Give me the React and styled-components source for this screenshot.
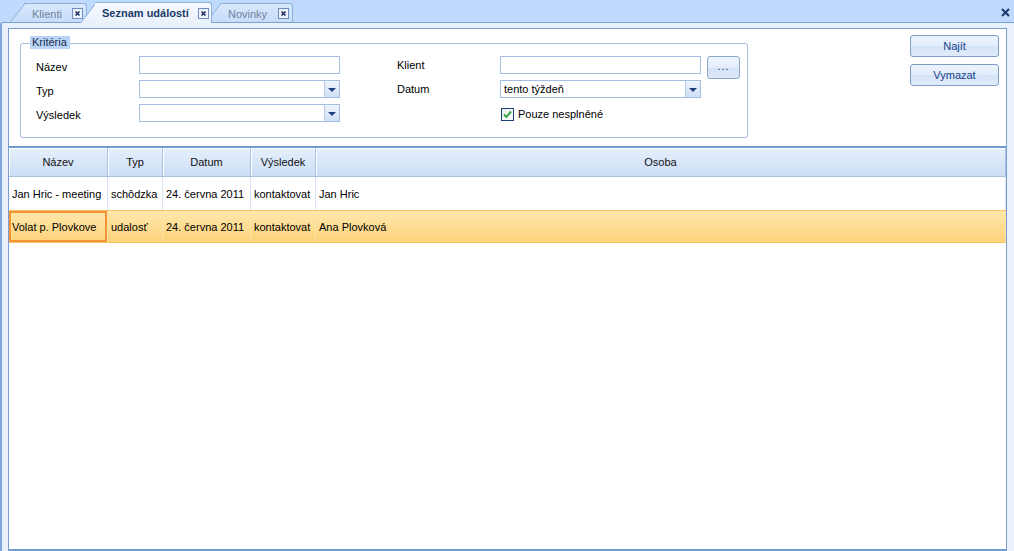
import styled, { createGlobalStyle } from 'styled-components'

const GlobalStyle = createGlobalStyle`
  html, body { margin: 0; padding: 0; }
  body {
    font-family: "Liberation Sans", Arial, sans-serif;
    font-size: 11px;
    color: #000;
  }
  * { box-sizing: border-box; }
`;

const Window = styled.div`
  width: 1014px;
  height: 551px;
  background: #bfdafc;
  display: flex;
  flex-direction: column;
  overflow: hidden;
`;

const TabStrip = styled.div`
  height: 22px;
  flex-shrink: 0;
  display: flex;
  align-items: flex-end;
  padding-left: 10px;
  position: relative;
  z-index: 2;
`;

const Tab = styled.div`
  position: relative;
  isolation: isolate;
  z-index: ${p => (p.$active ? 3 : 1)};
  width: ${p => p.$w}px;
  height: ${p => (p.$active ? 21 : 19)}px;
  margin-left: ${p => p.$ml || 0}px;
  margin-bottom: ${p => (p.$active ? -1 : 0)}px;
  padding: ${p => (p.$active ? 1 : 2)}px ${p => p.$pr || 4}px 0 22px;
  display: flex;
  align-items: center;
  justify-content: space-between;
  font-size: 11px;
  font-weight: ${p => (p.$active ? 'bold' : 'normal')};
  color: ${p => (p.$active ? '#1b3a66' : '#6f819b')};

  &::before, &::after {
    content: '';
    position: absolute;
    z-index: -1;
    top: 0;
    bottom: 0;
    background: ${p => (p.$active
      ? 'linear-gradient(#f7faff, #e9f1fb)'
      : 'linear-gradient(#d9e8fd, #c6dcf9)')};
    border-top: 1px solid #8eb0dd;
  }
  &::before {
    left: 0;
    width: 22px;
    border-left: 1px solid #8eb0dd;
    transform-origin: bottom left;
    transform: skewX(-38deg);
  }
  &::after {
    left: 15px;
    right: 0;
    border-right: 1px solid #8eb0dd;
    border-top-right-radius: 3px;
  }
`;

const TabClose = styled.svg`
  flex-shrink: 0;
  display: block;
`;

const WindowClose = styled.svg`
  margin-left: auto;
  margin-right: 4px;
  align-self: center;
  margin-top: 3px;
`;

const Frame = styled.div`
  flex: 1;
  min-height: 0;
  display: flex;
  flex-direction: column;
  background: #e9f1fb;
  border-top: 1px solid #7ba2d8;
  border-left: 2px solid #7fa7db;
  border-top-left-radius: 3px;
  padding: 5px 7px 0 6px;
`;

const Panel = styled.div`
  flex: 1;
  min-height: 0;
  display: flex;
  flex-direction: column;
  background: #fff;
  border: 1px solid #7b9dd2;
  border-bottom: 2px solid #6e9ed4;
`;

const FilterArea = styled.div`
  height: 117px;
  flex-shrink: 0;
  display: flex;
  justify-content: space-between;
  padding: 0 7px 0 11px;
`;

const GroupBox = styled.div`
  position: relative;
  margin-top: 14px;
  width: 728px;
  height: 95px;
  border: 1px solid #a5bfe4;
  border-radius: 3px;
  padding: 12px 0 0 15px;
`;

const Legend = styled.span`
  position: absolute;
  top: -8px;
  left: 9px;
  height: 13px;
  line-height: 13px;
  padding: 0 3px 0 2px;
  background: #b9d4f7;
  color: #1b2f4e;
`;

const FieldGrid = styled.div`
  display: grid;
  grid-template-columns: 103px 201px 57px 103px 201px 6px 33px;
  grid-auto-rows: 24px;
  align-items: start;
`;

const Label = styled.span`
  line-height: 18px;
  padding-top: ${p => (p.$up ? 0 : 2)}px;
  grid-column: ${p => p.$col};
`;

const TextBox = styled.div`
  grid-column: ${p => p.$col};
  height: 18px;
  border: 1px solid #a4bde5;
  background: #fff;
  display: flex;
  align-items: center;
  padding-left: 3px;
  padding-right: ${p => (p.$combo ? 0 : 3)}px;
`;

const ComboValue = styled.span`
  flex: 1;
  line-height: 16px;
`;

const ComboArrow = styled.div`
  width: 15px;
  height: 16px;
  background: linear-gradient(#edf4fd, #cfdff5);
  border-left: 1px solid #b3c8e8;
  display: flex;
  align-items: center;
  justify-content: center;
`;

const Triangle = styled.span`
  width: 0;
  height: 0;
  border-left: 4px solid transparent;
  border-right: 4px solid transparent;
  border-top: 4px solid #1f3f7a;
  margin-top: 1px;
`;

const DotsButton = styled.button`
  grid-column: 7;
  width: 33px;
  height: 23px;
  padding: 0 0 4px;
  border: 1px solid #8ea7c9;
  border-radius: 3px;
  background: linear-gradient(#eef4fd 0%, #e4eefb 50%, #d2e2f6 51%, #dde9f9 100%);
  font-family: inherit;
  font-size: 11px;
  color: #1b3a66;
  letter-spacing: 1px;
`;

const CheckRow = styled.label`
  grid-column: 5 / span 3;
  display: flex;
  align-items: center;
  gap: 4px;
  padding-left: 1px;
  height: 18px;
  margin-top: 1px;
`;

const CheckBox = styled.span`
  width: 13px;
  height: 13px;
  border: 1px solid #1c3f73;
  background: linear-gradient(135deg, #e9ecef, #ffffff);
  display: flex;
  align-items: center;
  justify-content: center;
`;

const ButtonColumn = styled.div`
  display: flex;
  flex-direction: column;
  gap: 7px;
  margin-top: 6px;
`;

const ActionButton = styled.button`
  width: 89px;
  height: 22px;
  border: 1px solid #7f9cc8;
  border-radius: 3px;
  background: linear-gradient(#ecf3fd 0%, #e3edfb 48%, #d5e4f7 52%, #e0ebfa 100%);
  font-family: inherit;
  font-size: 11px;
  color: #15428b;
  padding: 0;
`;

const COLS = '99px 55px 88px 65px 1fr';

const Grid = styled.div`
  flex: 1;
  border-top: 2px solid #6f9bd4;
  display: flex;
  flex-direction: column;
`;

const HeaderRow = styled.div`
  display: grid;
  grid-template-columns: ${COLS};
  height: 29px;
  border-bottom: 1px solid #a9c2e2;
`;

const HeaderCell = styled.div`
  display: flex;
  align-items: center;
  justify-content: center;
  background: linear-gradient(#e6f0fd, #cbddf6);
  border-right: 1px solid #a7c3e8;
  box-shadow: inset 1px 1px 0 #fff;
  color: #111;
`;

const Row = styled.div`
  display: grid;
  grid-template-columns: ${COLS};
  height: 33px;
  background: ${p => (p.$selected ? 'linear-gradient(#ffe8ab, #fdd27a)' : '#fff')};
  border-top: ${p => (p.$selected ? '1px solid #f6c462' : 'none')};
  border-bottom: ${p => (p.$selected ? '1px solid #f6c462' : 'none')};
`;

const Cell = styled.div`
  display: flex;
  align-items: center;
  padding-left: 3px;
  white-space: nowrap;
  overflow: hidden;
  border-right: 1px solid ${p => (p.$selected ? '#fde3a8' : '#d6e4f5')};
  box-shadow: ${p => (p.$focus ? 'inset 0 0 0 2px #f29436' : 'none')};
`;

const tabs = [
  { label: 'Klienti', w: 77, ml: 0 },
  { label: 'Seznam událostí', w: 132, ml: -7, active: true, pr: 3 },
  { label: 'Novinky', w: 87, ml: -6 },
];

const rows = [
  ['Jan Hric - meeting', 'schôdzka', '24. června 2011', 'kontaktovat', 'Jan Hric'],
  ['Volat p. Plovkove', 'udalosť', '24. června 2011', 'kontaktovat', 'Ana Plovková'],
];

function CloseBox() {
  return (
    <TabClose width="11" height="11" viewBox="0 0 11 11">
      <rect x="0.5" y="0.5" width="10" height="10" fill="#eef3fb" stroke="#6f8fbf" />
      <path d="M3.5 3.5L7.5 7.5M7.5 3.5L3.5 7.5" stroke="#1b2f5a" strokeWidth="1.6" />
    </TabClose>
  );
}

function Combo({ col, value }) {
  return (
    <TextBox $col={col} $combo>
      <ComboValue>{value}</ComboValue>
      <ComboArrow><Triangle /></ComboArrow>
    </TextBox>
  );
}

export default function App() {
  return (
    <>
      <GlobalStyle />
      <Window>
        <TabStrip>
          {tabs.map(t => (
            <Tab key={t.label} $w={t.w} $ml={t.ml} $active={t.active} $pr={t.pr}>
              <span>{t.label}</span>
              <CloseBox />
            </Tab>
          ))}
          <WindowClose width="9" height="9" viewBox="0 0 9 9">
            <path d="M1 1L8 8M8 1L1 8" stroke="#1b3a6e" strokeWidth="2" />
          </WindowClose>
        </TabStrip>
        <Frame>
          <Panel>
            <FilterArea>
              <GroupBox>
                <Legend>Kritéria</Legend>
                <FieldGrid>
                  <Label $col={1}>Název</Label>
                  <TextBox $col={2} />
                  <Label $col={4} $up>Klient</Label>
                  <TextBox $col={5} />
                  <DotsButton>...</DotsButton>

                  <Label $col={1}>Typ</Label>
                  <Combo col={2} />
                  <Label $col={4} $up>Datum</Label>
                  <Combo col={5} value="tento týždeň" />

                  <Label $col={1}>Výsledek</Label>
                  <Combo col={2} />
                  <CheckRow>
                    <CheckBox>
                      <svg width="9" height="9" viewBox="0 0 9 9">
                        <path d="M1 4.5L3.5 7L8 1.5" fill="none" stroke="#3aa644" strokeWidth="2" />
                      </svg>
                    </CheckBox>
                    Pouze nesplněné
                  </CheckRow>
                </FieldGrid>
              </GroupBox>
              <ButtonColumn>
                <ActionButton>Najít</ActionButton>
                <ActionButton>Vymazat</ActionButton>
              </ButtonColumn>
            </FilterArea>
            <Grid>
              <HeaderRow>
                {['Název', 'Typ', 'Datum', 'Výsledek', 'Osoba'].map(h => (
                  <HeaderCell key={h}>{h}</HeaderCell>
                ))}
              </HeaderRow>
              {rows.map((r, i) => (
                <Row key={i} $selected={i === 1}>
                  {r.map((c, j) => (
                    <Cell key={j} $selected={i === 1} $focus={i === 1 && j === 0}>{c}</Cell>
                  ))}
                </Row>
              ))}
            </Grid>
          </Panel>
        </Frame>
      </Window>
    </>
  );
}
